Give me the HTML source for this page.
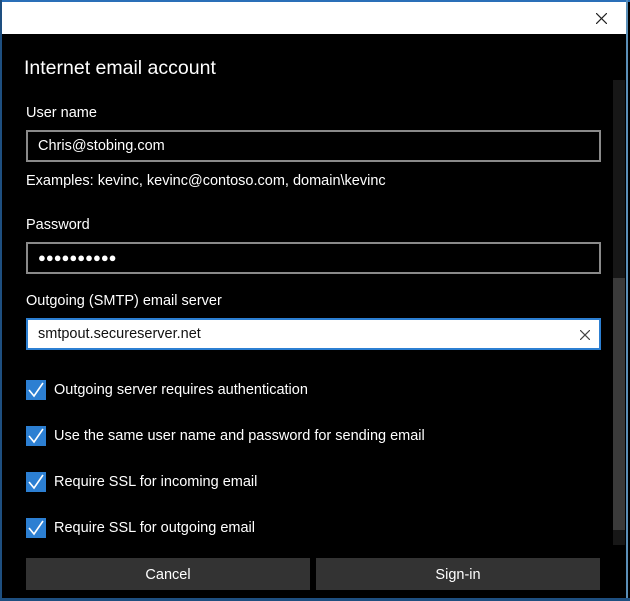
<!DOCTYPE html>
<html><head><style>
body{margin:0;width:630px;height:601px;background:#000;position:relative;overflow:hidden;font-family:"Liberation Sans",sans-serif;color:#fff}
.a{position:absolute}
.lbl{font-size:14.5px;color:#fff}
.field{position:absolute;left:26px;width:571px;height:28px;border:2px solid #8a8a8a;box-sizing:content-box}
.cb{position:absolute;left:26px;width:20px;height:20px;background:#2c7fd2}
.cbt{position:absolute;left:54px;font-size:14.5px}
.btn{position:absolute;top:558px;height:32px;background:#333;font-size:14.5px;text-align:center;line-height:34px}
</style></head><body>
<div class="a" style="left:0;top:0;width:630px;height:2px;background:#2a6fb8"></div>
<div class="a" style="left:2px;top:2px;width:624px;height:32px;background:#fff"></div>
<svg class="a" style="left:596px;top:13px" width="11" height="11"><path d="M0 0L11 11M11 0L0 11" stroke="#222" stroke-width="1.2"/></svg>
<div class="a" style="left:0;top:0;width:2px;height:601px;background:#1e4f80"></div>
<div class="a" style="left:626px;top:0;width:2px;height:601px;background:#5a8fb8"></div>
<div class="a" style="left:0;top:598px;width:630px;height:3px;background:#1e4f80"></div>
<div class="a" style="left:24px;top:57px;font-size:19.5px">Internet email account</div>
<div class="a lbl" style="left:26px;top:105px">User name</div>
<div class="field" style="top:130px"><div style="padding:6px 10px;font-size:14.5px">Chris@stobing.com</div></div>
<div class="a lbl" style="left:26px;top:173px">Examples: kevinc, kevinc@contoso.com, domain\kevinc</div>
<div class="a lbl" style="left:26px;top:217px">Password</div>
<div class="field" style="top:242px"><div style="padding:6px 10px;font-size:13px;letter-spacing:0px">●●●●●●●●●●</div></div>
<div class="a lbl" style="left:26px;top:293px">Outgoing (SMTP) email server</div>
<div class="field" style="top:318px;background:#fff;border-color:#2c7fd2;color:#111"><div style="padding:6px 10px;font-size:14.5px">smtpout.secureserver.net</div><svg class="a" style="right:9px;top:10px" width="10" height="10"><path d="M0 0L10 10M10 0L0 10" stroke="#444" stroke-width="1.2"/></svg></div>
<div class="cb" style="top:380px"></div><div class="cbt" style="top:382px">Outgoing server requires authentication</div>
<div class="cb" style="top:426px"></div><div class="cbt" style="top:428px">Use the same user name and password for sending email</div>
<div class="cb" style="top:472px"></div><div class="cbt" style="top:474px">Require SSL for incoming email</div>
<div class="cb" style="top:518px"></div><div class="cbt" style="top:520px">Require SSL for outgoing email</div>
<svg class="a" style="left:26px;top:380px" width="20" height="160"><g fill="none" stroke="#fff" stroke-width="1.6"><path d="M3 10 L8 16 L17 3"/><path d="M3 56 L8 62 L17 49"/><path d="M3 102 L8 108 L17 95"/><path d="M3 148 L8 154 L17 141"/></g></svg>
<div class="btn" style="left:26px;width:284px">Cancel</div>
<div class="btn" style="left:316px;width:284px">Sign-in</div>
<div class="a" style="left:613px;top:80px;width:12px;height:465px;background:#171717"></div>
<div class="a" style="left:613px;top:278px;width:12px;height:252px;background:#3a3a3a"></div>
</body></html>
